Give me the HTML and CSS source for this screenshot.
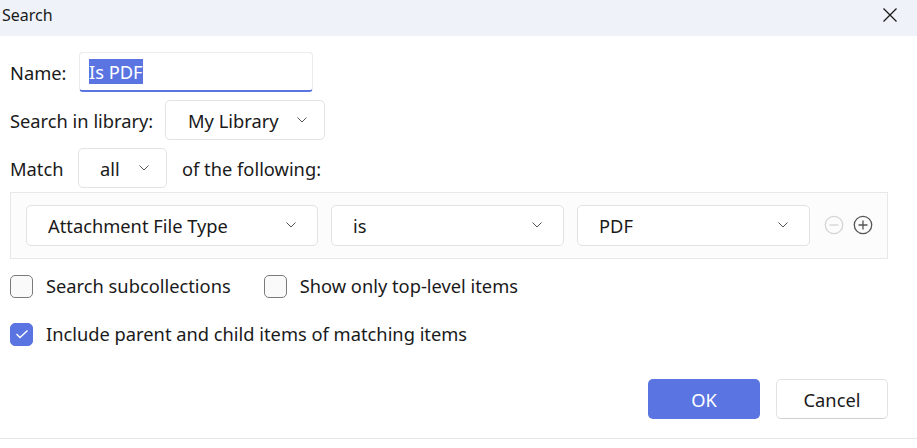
FILE: index.html
```html
<!DOCTYPE html>
<html>
<head>
<meta charset="utf-8">
<link rel="stylesheet" href="styles.css">
</head>
<body>
<div class="dialog">
  <div class="titlebar">
    <span class="title">Search</span>
    <svg class="close" width="16" height="16" viewBox="0 0 16 16"><path d="M1.5 1.5 L14.5 14.5 M14.5 1.5 L1.5 14.5" stroke="#1a1a1a" stroke-width="1.3" fill="none"/></svg>
  </div>
  <div class="content">
    <div class="row row-name">
      <span class="label">Name:</span>
      <div class="input"><span class="sel">Is PDF</span></div>
    </div>
    <div class="row row-lib">
      <span class="label">Search in library:</span>
      <div class="btn-select lib"><span>My Library</span><svg class="chev" width="10" height="6" viewBox="0 0 10 6"><path d="M0.5 0.5 L5 5 L9.5 0.5" stroke="#555" stroke-width="1" fill="none"/></svg></div>
    </div>
    <div class="row row-match">
      <span class="label">Match</span>
      <div class="btn-select all"><span>all</span><svg class="chev" width="10" height="6" viewBox="0 0 10 6"><path d="M0.5 0.5 L5 5 L9.5 0.5" stroke="#555" stroke-width="1" fill="none"/></svg></div>
      <span class="label follow">of the following:</span>
    </div>
    <div class="conditions">
      <div class="select s1"><span>Attachment File Type</span><svg class="chev" width="10" height="6" viewBox="0 0 10 6"><path d="M0.5 0.5 L5 5 L9.5 0.5" stroke="#555" stroke-width="1" fill="none"/></svg></div>
      <div class="select s2"><span>is</span><svg class="chev" width="10" height="6" viewBox="0 0 10 6"><path d="M0.5 0.5 L5 5 L9.5 0.5" stroke="#555" stroke-width="1" fill="none"/></svg></div>
      <div class="select s3"><span>PDF</span><svg class="chev" width="10" height="6" viewBox="0 0 10 6"><path d="M0.5 0.5 L5 5 L9.5 0.5" stroke="#555" stroke-width="1" fill="none"/></svg></div>
      <svg class="icon minus" width="20" height="20" viewBox="0 0 20 20"><circle cx="10" cy="10" r="8.7" stroke="#d4d4d4" stroke-width="1.3" fill="none"/><path d="M5.5 10 H14.5" stroke="#d4d4d4" stroke-width="1.3"/></svg>
      <svg class="icon plus" width="20" height="20" viewBox="0 0 20 20"><circle cx="10" cy="10" r="8.7" stroke="#555" stroke-width="1.3" fill="none"/><path d="M5.5 10 H14.5 M10 5.5 V14.5" stroke="#555" stroke-width="1.3"/></svg>
    </div>
    <div class="checks">
      <label class="check"><span class="box"></span><span>Search subcollections</span></label>
      <label class="check second"><span class="box"></span><span>Show only top-level items</span></label>
    </div>
    <div class="checks checks2">
      <label class="check"><span class="box on"><svg width="14" height="10" viewBox="0 0 14 10"><path d="M1.5 5 L5 8.5 L12.5 1.5" stroke="#fff" stroke-width="1.4" fill="none"/></svg></span><span>Include parent and child items of matching items</span></label>
    </div>
    <div class="footer">
      <div class="btn ok">OK</div>
      <div class="btn cancel">Cancel</div>
    </div>
  </div>
</div>
</body>
</html>
```
FILE: styles.css
```css
* { box-sizing: border-box; }
html, body { margin: 0; padding: 0; }
body {
  width: 917px;
  height: 448px;
  background: #fff;
  font-family: "Noto Sans", "Open Sans", sans-serif;
  color: #1a1a1a;
  overflow: hidden;
}
.dialog { width: 917px; height: 448px; display: flex; flex-direction: column; }
.titlebar {
  height: 36px;
  background: #eff2f9;
  display: flex;
  align-items: center;
  justify-content: space-between;
  padding: 0 19px 6px 2px;
  font-size: 16px;
}
.close { display: block; }
.content {
  flex: 1;
  padding: 16px 29px 0 10px;
  display: flex;
  flex-direction: column;
  border-bottom: 1px solid #e6e6e6;
  margin-bottom: 9px;
}
.row { display: flex; align-items: center; font-size: 18.3px; }
.label { white-space: nowrap; }
.row-name { height: 40px; }
.row-name .label { width: 69px; }
.input {
  width: 234px;
  height: 40px;
  border: 1px solid #ececec;
  border-bottom: 2px solid #5a75e2;
  border-radius: 4px;
  padding-left: 9px;
  display: flex;
  align-items: center;
}
.sel { background: #5a75e2; color: #fff; line-height: 25px; }
.row-lib { margin-top: 8px; height: 40px; }
.row-lib .label { width: 155px; }
.btn-select {
  height: 40px;
  border: 1px solid #e3e3e3;
  border-radius: 5px;
  display: flex;
  align-items: center;
  padding-left: 22px;
  background: #fff;
}
.btn-select.lib { width: 160px; }
.btn-select.lib .chev { margin-left: 18px; }
.btn-select.all { width: 89px; padding-left: 21px; }
.btn-select.all .chev { margin-left: 19px; }
.row-match { margin-top: 8px; height: 40px; }
.row-match .label { width: 68px; }
.row-match .label.follow { width: auto; margin-left: 15px; }
.chev { display: block; }
.conditions {
  margin-top: 4px;
  height: 67px;
  border: 1px solid #e8e8e8;
  background: #fcfcfc;
  display: flex;
  align-items: center;
  padding: 0 0 1px 15px;
  font-size: 18.3px;
}
.select {
  height: 41px;
  border: 1px solid #e2e2e2;
  border-radius: 5px;
  background: #fff;
  display: flex;
  align-items: center;
  justify-content: space-between;
  padding: 0 21px 0 21px;
  margin-right: 13px;
}
.s1 { width: 292px; }
.s2 { width: 233px; }
.s3 { width: 233px; margin-right: 14px; }
.icon { display: block; }
.minus { margin-right: 9px; }
.checks { display: flex; align-items: center; height: 24px; margin-top: 15px; font-size: 18.3px; line-height: 24px; }
.checks2 { margin-top: 24px; }
.check { display: flex; align-items: center; }
.check.second { margin-left: 33px; }
.box {
  width: 23px;
  height: 23px;
  border: 1px solid #7a7a7a;
  border-radius: 5px;
  background: #fafafa;
  margin-right: 13px;
  display: flex;
  align-items: center;
  justify-content: center;
}
.box.on { background: #5a75e2; border-color: #5a75e2; }
.box svg { display: block; }
.footer {
  display: flex;
  justify-content: flex-end;
  margin-top: 33px;
  gap: 16px;
}
.btn {
  width: 112px;
  height: 40px;
  border-radius: 5px;
  display: flex;
  align-items: center;
  justify-content: center;
  font-size: 18.3px;
}
.ok { background: #5a75e2; color: #fff; }
.cancel { background: #fff; border: 1px solid #e2e2e2; border-bottom-color: #cfcfcf; color: #1a1a1a; }
```
